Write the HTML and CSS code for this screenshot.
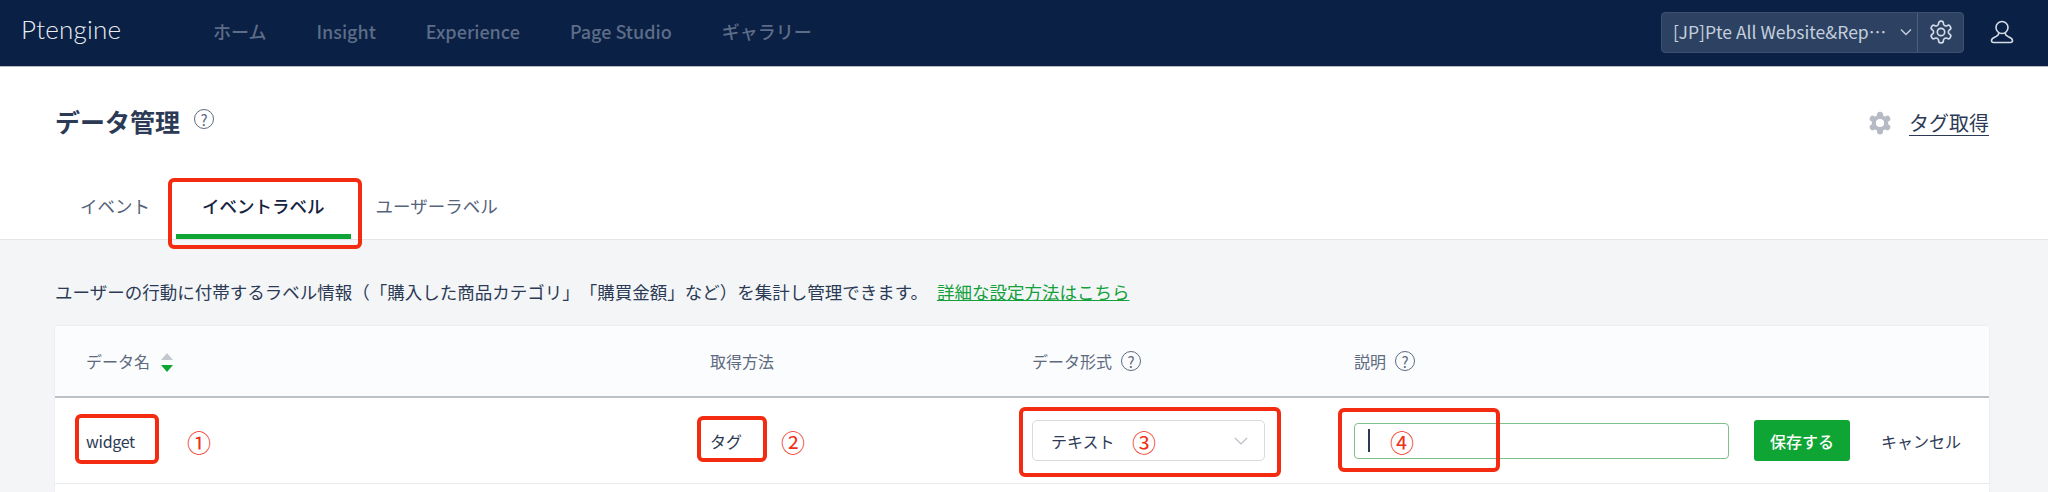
FILE: index.html
```html
<!DOCTYPE html>
<html lang="ja">
<head>
    <meta charset="UTF-8">
    <title>データ管理</title>
    <link rel="stylesheet" href="styles.css">
</head>
<body>
    <div class="page">
        <nav class="topbar">
            <div class="logo">Ptengine</div>
            <ul class="menu">
                <li>ホーム</li>
                <li>Insight</li>
                <li>Experience</li>
                <li>Page Studio</li>
                <li>ギャラリー</li>
            </ul>
            <div class="site-picker">
                <div class="site-name">[JP]Pte All Website&amp;Rep⋯</div>
                <svg class="site-arrow" viewBox="0 0 12 8"><path d="M1 1.500l5 5 5-5"/></svg>
                <div class="site-gear">
                    <svg viewBox="0 0 24 24"><use href="#gear"/><circle cx="12" cy="12" r="3.400"/></svg>
                </div>
            </div>
            <svg class="user-icon" viewBox="0 0 24 24">
                <circle cx="12" cy="7.500" r="6"/>
                <path d="M8.600 12.500c.5 2-.8 3.200-3 4.200C3 17.800 1.500 18.700 1.500 20.500c0 1.300.8 2 2 2h17c1.200 0 2-.7 2-2 0-1.800-1.500-2.700-4.100-3.800-2.200-1-3.500-2.200-3-4.200"/>
            </svg>
        </nav>

        <header class="head">
            <div class="title-row">
                <h1>データ管理</h1>
                <span class="help help-title">?</span>
                <div class="tag-link">
                    <svg class="solid-gear" viewBox="0 0 24 24"><use href="#gear"/><circle cx="12" cy="12" r="3.800"/></svg>
                    <a>タグ取得</a>
                </div>
            </div>
            <div class="tabs">
                <div class="tab">イベント</div>
                <div class="tab active">イベントラベル</div>
                <div class="tab">ユーザーラベル</div>
            </div>
        </header>

        <main class="content">
            <p class="intro">ユーザーの行動に付帯するラベル情報（「購入した商品カテゴリ」「購買金額」など）を集計し管理できます。<a>詳細な設定方法はこちら</a></p>
            <section class="card">
                <div class="row row-head">
                    <div class="cell">データ名<span class="sort"><i class="up"></i><i class="down"></i></span></div>
                    <div class="cell">取得方法</div>
                    <div class="cell">データ形式<span class="help">?</span></div>
                    <div class="cell">説明<span class="help">?</span></div>
                </div>
                <div class="row row-body">
                    <div class="cell">widget</div>
                    <div class="cell">タグ</div>
                    <div class="cell">
                        <div class="select">
                            <span>テキスト</span>
                            <svg viewBox="0 0 14 8"><path d="M1 1l6 6 6-6"/></svg>
                        </div>
                    </div>
                    <div class="cell edit-cell">
                        <div class="input"><span class="caret"></span></div>
                        <button class="save">保存する</button>
                        <button class="cancel">キャンセル</button>
                    </div>
                </div>
            </section>
        </main>

        <!-- screenshot annotations -->
        <div class="box box-tab"></div>
        <div class="box box-name"></div>
        <div class="box box-method"></div>
        <div class="box box-format"></div>
        <div class="box box-desc"></div>
        <span class="num num-1">①</span>
        <span class="num num-2">②</span>
        <span class="num num-3">③</span>
        <span class="num num-4">④</span>
    </div>

    <svg class="defs" width="0" height="0">
        <defs>
            <path id="gear" d="M12.220 2h-.44a2 2 0 0 0-2 2v.18a2 2 0 0 1-1 1.730l-.43.25a2 2 0 0 1-2 0l-.15-.08a2 2 0 0 0-2.730.73l-.22.38a2 2 0 0 0 .73 2.730l.15.1a2 2 0 0 1 1 1.720v.51a2 2 0 0 1-1 1.740l-.15.09a2 2 0 0 0-.73 2.730l.22.38a2 2 0 0 0 2.730.73l.15-.08a2 2 0 0 1 2 0l.43.25a2 2 0 0 1 1 1.730V20a2 2 0 0 0 2 2h.44a2 2 0 0 0 2-2v-.18a2 2 0 0 1 1-1.730l.43-.25a2 2 0 0 1 2 0l.15.08a2 2 0 0 0 2.730-.73l.22-.39a2 2 0 0 0-.73-2.730l-.15-.08a2 2 0 0 1-1-1.740v-.5a2 2 0 0 1 1-1.740l.15-.09a2 2 0 0 0 .73-2.730l-.22-.38a2 2 0 0 0-2.730-.73l-.15.08a2 2 0 0 1-2 0l-.43-.25a2 2 0 0 1-1-1.730V4a2 2 0 0 0-2-2z"/>
        </defs>
    </svg>
</body>
</html>
```

FILE: styles.css
```css
* {
    box-sizing: border-box;
}

body {
    margin: 0;
    font-family: "Noto Sans CJK JP", "Noto Sans", sans-serif;
    color: #2c3a55;
    background: #fff;
    text-spacing-trim: space-all;
}

.page {
    position: relative;
    display: flex;
    flex-direction: column;
    height: 492px;
    overflow: hidden;
}

.defs {
    position: absolute;
}

/* top bar */
.topbar {
    display: flex;
    align-items: center;
    flex: none;
    height: 67px;
    padding: 0 34px 0 21px;
    background: #0a2044;
    border-bottom: 1px solid #b4b9c4;
}

.logo {
    width: 192px;
    margin-top: -9px;
    font-family: "Lato", sans-serif;
    font-size: 26px;
    font-weight: 300;
    letter-spacing: .2px;
    color: #e9edf2;
}

.menu {
    display: flex;
    gap: 50px;
    margin: -5px 0 0;
    padding: 0;
    list-style: none;
    font-size: 18px;
    font-weight: 500;
    color: #5d6d88;
}

.site-picker {
    display: flex;
    align-items: center;
    width: 303px;
    height: 41px;
    margin: -2px 26px 0 auto;
    background: #2d4262;
    border: 1px solid #3c5070;
    border-radius: 4px;
}

.site-name {
    width: 238px;
    padding-left: 11px;
    margin-top: -2px;
    font-size: 17.5px;
    white-space: nowrap;
    color: #c4cfde;
}

.site-arrow {
    width: 12px;
    height: 8px;
    margin-left: 1px;
    fill: none;
    stroke: #c4cfde;
    stroke-width: 1.400;
}

.site-gear {
    display: flex;
    align-items: center;
    justify-content: center;
    width: 46px;
    height: 39px;
    margin-left: 5px;
    border-left: 1px solid #4b5e7c;
}

.site-gear svg {
    width: 26px;
    height: 26px;
    fill: none;
    stroke: #d5dce6;
    stroke-width: 1.500;
}

.user-icon {
    width: 24px;
    height: 24px;
    margin-top: -2px;
    fill: none;
    stroke: #d5dce6;
    stroke-width: 1.600;
}

/* page head */
.head {
    flex: none;
    height: 173px;
    padding: 0 59px 0 55px;
    border-bottom: 1px solid #e3e5e9;
}

.title-row {
    display: flex;
    align-items: center;
    height: 110px;
}

h1 {
    margin: -2px 0 0;
    font-size: 25px;
    font-weight: 700;
    color: #2c3a55;
}

.help {
    display: inline-flex;
    align-items: center;
    justify-content: center;
    width: 20px;
    height: 20px;
    margin-left: 9px;
    border: 1px solid #5d6a80;
    border-radius: 50%;
    font-size: 15px;
    line-height: 1;
    color: #5d6a80;
}

.help-title {
    margin: -6px 0 0 14px;
}

.tag-link {
    display: flex;
    align-items: center;
    gap: 16px;
    margin-left: auto;
    margin-top: 2px;
    font-size: 20px;
}

.tag-link a {
    line-height: 24px;
    border-bottom: 1px solid #2c3a55;
}

.solid-gear {
    width: 26px;
    height: 26px;
    fill-rule: evenodd;
    fill: #b5bac4;
    stroke: #b5bac4;
}

.solid-gear circle {
    fill: #fff;
    stroke: none;
}

.tabs {
    display: flex;
    height: 62px;
}

.tab {
    padding: 16px 25px 0;
    font-size: 17.5px;
    line-height: 26px;
    color: #56637a;
}

.tab.active {
    margin-left: 1px;
    padding: 16px 26px 0;
    font-weight: 500;
    color: #15233f;
    border-bottom: 5px solid #0ea534;
}

/* content */
.content {
    flex: 1;
    padding: 0 59px 0 55px;
    background: #f3f5f7;
}

.intro {
    margin: 0;
    padding-top: 39px;
    font-size: 17.5px;
    line-height: 26px;
    white-space: nowrap;
    color: #2c3a55;
}

.intro a {
    color: #14a03a;
    text-decoration: underline;
    margin-left: 9px;
}

.card {
    height: 200px;
    margin-top: 21px;
    background: #fff;
    box-shadow: 0 0 2px rgba(0, 0, 0, .08);
}

.row {
    display: grid;
    grid-template-columns: 655px 322px 322px 1fr;
    align-items: center;
}

.row-head {
    height: 72px;
    font-size: 16px;
    color: #5d6a80;
    background: #fbfcfd;
    border-bottom: 2px solid #bcc0c7;
}

.row-body {
    height: 86px;
    font-size: 16px;
    color: #2c3a55;
    border-bottom: 1px solid #e8eaed;
}

.row-body .cell:first-child {
    letter-spacing: -.3px;
}

.cell {
    display: flex;
    align-items: center;
}

.cell:first-child {
    padding-left: 31px;
}

.sort {
    display: flex;
    flex-direction: column;
    gap: 5px;
    margin: 2px 0 0 11px;
}

.sort i {
    display: block;
    width: 0;
    height: 0;
    border-left: 6px solid transparent;
    border-right: 6px solid transparent;
}

.sort .up {
    border-bottom: 7px solid #c3c7ce;
}

.sort .down {
    border-top: 7px solid #0ea534;
}

.select {
    display: flex;
    align-items: center;
    justify-content: space-between;
    width: 233px;
    height: 41px;
    padding: 0 16px 0 18px;
    background: #fff;
    border: 1px solid #d8dade;
    border-radius: 5px;
}

.select svg {
    width: 14px;
    height: 8px;
    fill: none;
    stroke: #b9bdc4;
    stroke-width: 1.200;
}

.edit-cell {
    gap: 25px;
}

.input {
    display: flex;
    align-items: center;
    width: 375px;
    height: 36px;
    padding-left: 13px;
    background: #fff;
    border: 1px solid #7fc08a;
    border-radius: 4px;
}

.caret {
    display: block;
    width: 1.500px;
    height: 23px;
    background: #2c3a55;
}

button {
    border: none;
    font-family: inherit;
    font-size: 16px;
    padding: 0;
    cursor: pointer;
}

.save {
    width: 96px;
    height: 41px;
    font-weight: 500;
    color: #fff;
    background: #0ea534;
    border-radius: 3px;
}

.cancel {
    margin-left: 6px;
    color: #2c3a55;
    background: none;
}

/* red annotations drawn over the screenshot */
.box {
    position: absolute;
    border: 4px solid #f32c11;
    border-radius: 6px;
}

.box-tab {
    left: 168px;
    top: 178px;
    width: 194px;
    height: 71px;
}

.box-name {
    left: 75px;
    top: 414px;
    width: 84px;
    height: 50px;
}

.box-method {
    left: 697px;
    top: 416px;
    width: 70px;
    height: 46px;
}

.box-format {
    left: 1019px;
    top: 407px;
    width: 262px;
    height: 70px;
}

.box-desc {
    left: 1338px;
    top: 408px;
    width: 162px;
    height: 64px;
}

.num {
    position: absolute;
    top: 424px;
    font-size: 24px;
    line-height: 36px;
    color: #ef2f17;
}

.num-1 {
    left: 187px;
}

.num-2 {
    left: 781px;
}

.num-3 {
    left: 1132px;
}

.num-4 {
    left: 1390px;
}
```
